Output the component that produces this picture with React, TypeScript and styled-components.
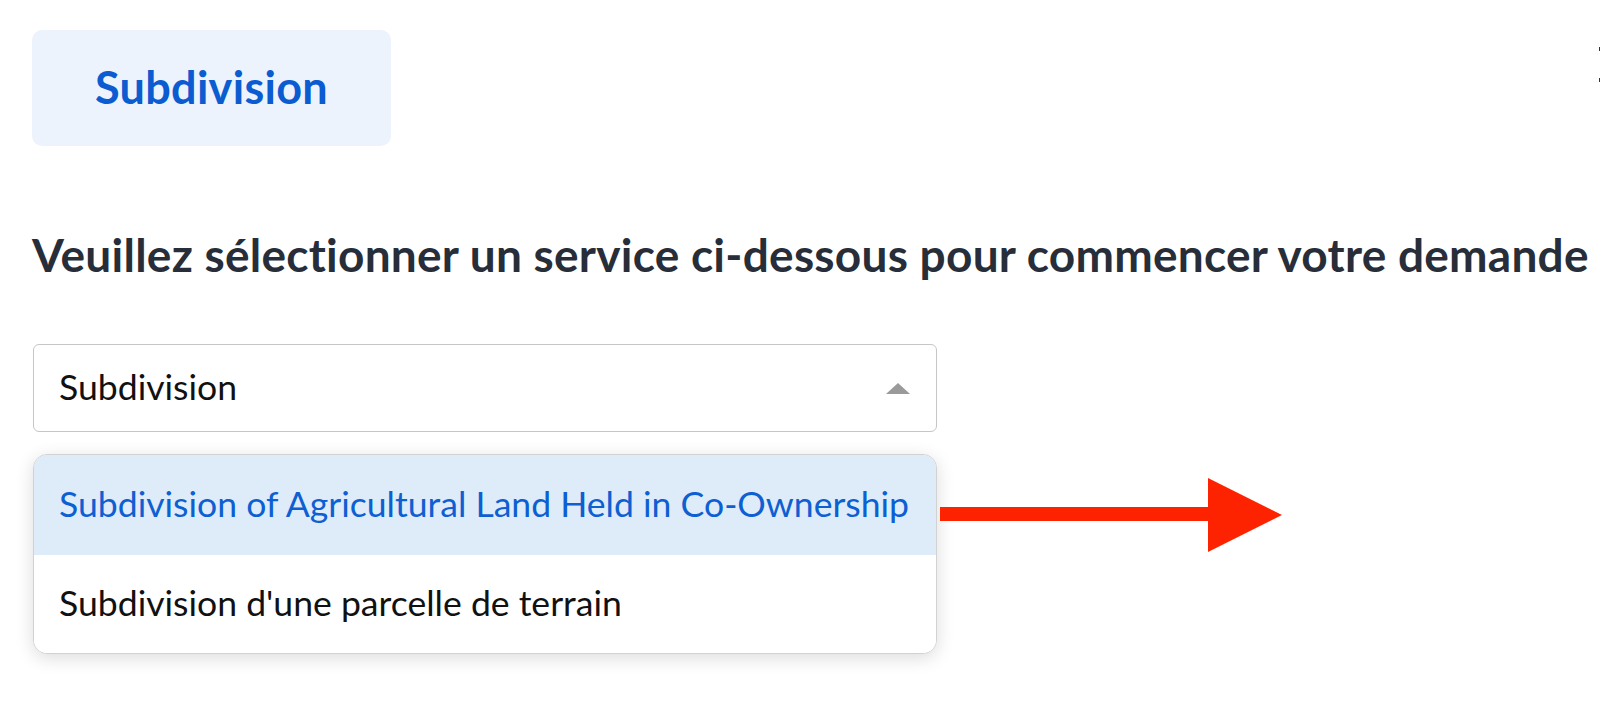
import React from "react";
import styled, { createGlobalStyle } from "styled-components";

const GlobalStyle = createGlobalStyle`
  html, body {
    margin: 0;
    padding: 0;
    background: #ffffff;
    overflow: hidden;
  }
  body {
    font-family: "Lato", "Open Sans", sans-serif;
  }
`;

const Page = styled.div`
  width: 1600px;
  height: 708px;
  box-sizing: border-box;
  padding: 30px 0 0 32px;
  display: flex;
  flex-direction: column;
`;

const TopRow = styled.div`
  display: flex;
  justify-content: space-between;
  align-items: flex-start;
`;

const ServiceTab = styled.div`
  width: 359px;
  height: 116px;
  border-radius: 10px;
  background: #ecf3fd;
  color: #0b5bd1;
  font-family: "Lato", sans-serif;
  font-weight: 700;
  font-size: 45px;
  letter-spacing: 0.3px;
  display: flex;
  align-items: center;
  justify-content: center;
  padding-bottom: 2px;
  box-sizing: border-box;
`;

const EdgeMarks = styled.div`
  width: 1px;
  padding-top: 17px;
  display: flex;
  flex-direction: column;
  gap: 27px;
`;

const EdgeMark = styled.span`
  display: block;
  width: 1px;
  height: 4px;
  background: #333;
`;

const Heading = styled.h2`
  margin: 81px 0 0 0;
  font-family: "Lato", sans-serif;
  font-weight: 700;
  font-size: 46px;
  line-height: 55px;
  color: #272e39;
  white-space: nowrap;
  letter-spacing: 0.25px;
`;

const SelectArea = styled.div`
  position: relative;
  margin-top: 62px;
  margin-left: 1px;
  width: 904px;
  display: flex;
  flex-direction: column;
  gap: 22px;
`;

const SelectBox = styled.div`
  height: 88px;
  box-sizing: border-box;
  border: 1px solid #c6c6c6;
  border-radius: 6px;
  background: #fff;
  padding: 0 26px 4px 25px;
  display: flex;
  align-items: center;
  justify-content: space-between;
  font-family: "Lato", sans-serif;
  font-size: 35.6px;
  color: #111;
`;

const Caret = styled.span`
  width: 0;
  height: 0;
  margin-top: 4px;
  border-left: 12px solid transparent;
  border-right: 12px solid transparent;
  border-bottom: 11px solid #9a9a9a;
`;

const Menu = styled.div`
  box-sizing: border-box;
  border: 1px solid #d2d2d2;
  border-radius: 14px;
  background: #fff;
  overflow: hidden;
  box-shadow: 0 4px 18px rgba(0, 0, 0, 0.14);
  display: flex;
  flex-direction: column;
`;

const Option = styled.div<{ $active?: boolean }>`
  height: ${(p) => (p.$active ? 100 : 98)}px;
  box-sizing: border-box;
  padding: 0 0 4px 25px;
  display: flex;
  align-items: center;
  font-family: "Lato", sans-serif;
  font-size: 35.6px;
  background: ${(p) => (p.$active ? "#deebf8" : "#ffffff")};
  color: ${(p) => (p.$active ? "#0d5fd2" : "#111111")};
  white-space: nowrap;
`;

const ArrowMark = styled.svg`
  position: absolute;
  left: 907px;
  top: 134px;
  overflow: visible;
`;

export default function App() {
  return (
    <>
      <GlobalStyle />
      <Page>
        <TopRow>
          <ServiceTab>Subdivision</ServiceTab>
          <EdgeMarks>
            <EdgeMark />
            <EdgeMark />
          </EdgeMarks>
        </TopRow>
        <Heading>
          Veuillez sélectionner un service ci-dessous pour commencer votre demande
        </Heading>
        <SelectArea>
          <SelectBox>
            <span>Subdivision</span>
            <Caret />
          </SelectBox>
          <Menu>
            <Option $active>Subdivision of Agricultural Land Held in Co-Ownership</Option>
            <Option>Subdivision d'une parcelle de terrain</Option>
          </Menu>
          <ArrowMark width="343" height="74" viewBox="0 0 343 74">
            <rect x="0" y="29" width="270" height="14" fill="#fe2300" />
            <polygon points="268,0 342,37 268,74" fill="#fe2300" />
          </ArrowMark>
        </SelectArea>
      </Page>
    </>
  );
}
